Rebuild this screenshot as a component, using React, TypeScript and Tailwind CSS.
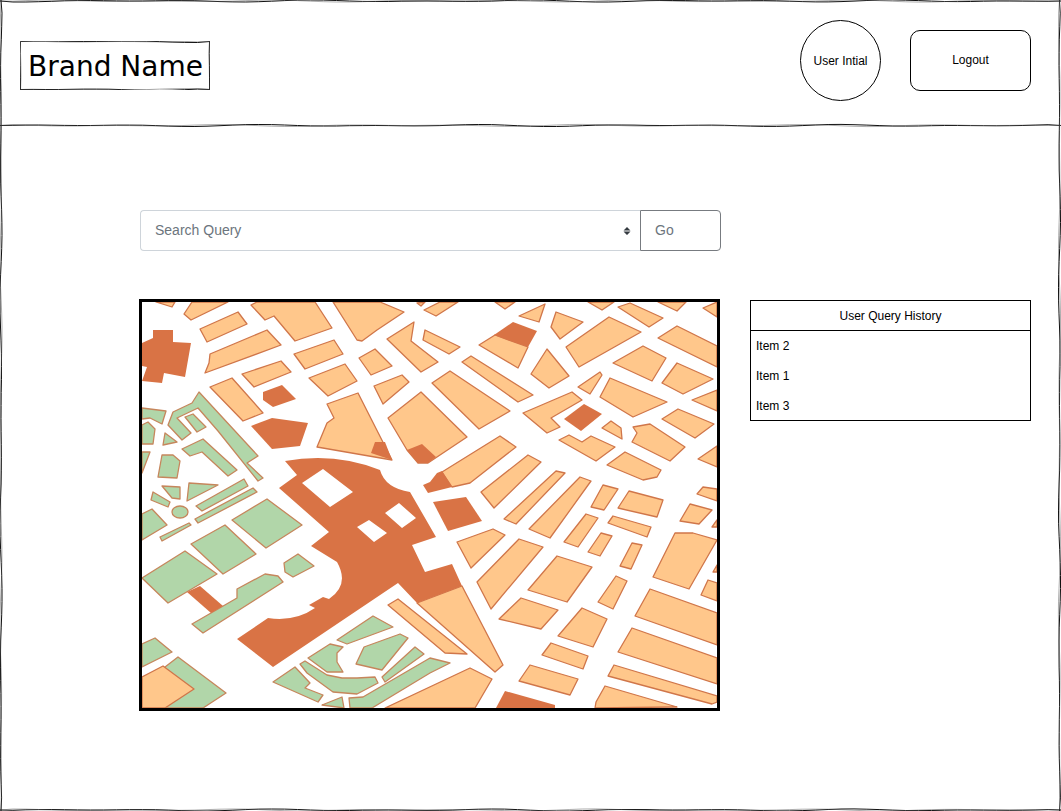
import React from "react";

const LIGHT = [
  "156,302 172,307 175,302", "192,302 184,314 191,320 228,302", "200,329 238,312 247,324 207,342",
  "210,354 267,330 281,345 205,373 209,363", "251,305 265,320 274,316 295,341 332,328 315,302 257,302",
  "294,354 334,340 343,354 305,369", "242,374 281,361 291,372 254,387", "309,378 345,364 357,381 328,396",
  "359,358 375,349 392,366 371,375", "333,302 380,302 404,312 377,330 362,341 357,340",
  "387,339 414,322 411,341 438,362 421,372", "423,340 425,330 460,347 449,354",
  "210,387 232,378 263,413 243,421",
  "417,303 421,306 425,302", "424,310 436,316 458,302 440,302", "495,302 505,309 515,302",
  "519,316 545,304 539,322", "556,312 583,322 560,339 551,327", "588,302 602,310 614,302",
  "618,307 630,303 663,318 649,327", "658,302 677,311 686,302", "703,308 717,302 717,317",
  "566,347 609,317 641,332 579,367", "658,338 677,326 717,346 717,367", "613,363 643,346 666,358 652,381",
  "662,383 677,363 713,379 683,394", "479,345 495,335 528,347 518,368", "462,362 471,356 533,395 518,402",
  "432,383 450,371 510,411 479,429", "531,374 547,349 569,376 549,388", "578,387 600,372 602,375 590,394",
  "600,397 610,378 667,402 633,417", "692,400 717,390 717,411", "698,459 717,446 717,467",
  "374,386 402,375 409,382 383,404", "388,418 421,392 467,437 428,463 418,463 407,450",
  "523,413 572,392 582,400 551,418 560,427 547,433", "602,428 611,421 621,428 622,439",
  "559,440 569,435 582,442 591,436 615,447 596,461", "633,427 650,424 685,447 670,461 632,442 637,433",
  "662,419 678,409 714,424 695,438", "607,465 625,452 661,470 657,477 643,480",
  "442,472 500,436 516,447 470,483 452,487", "481,492 528,455 541,462 494,508", "504,519 556,471 565,473 516,524",
  "529,529 580,477 591,481 550,538", "591,507 603,485 618,489 604,510", "618,508 629,491 663,500 657,517",
  "564,542 586,514 598,518 578,547", "608,523 613,516 651,527 647,537", "588,552 601,533 612,536 600,556",
  "620,566 632,543 642,545 631,569", "680,521 690,504 712,510 699,524", "697,494 703,487 717,489 717,501",
  "712,527 717,520 717,527", "653,577 675,533 693,533 717,540 689,589", "713,572 717,565 717,572",
  "701,595 708,580 717,583 717,601", "457,542 493,529 505,535 471,568", "477,582 519,539 543,547 491,609",
  "528,590 557,556 592,567 567,602", "598,602 616,576 627,581 613,609", "499,619 521,598 558,610 541,629",
  "558,636 582,608 607,619 593,647", "635,616 650,589 717,613 717,645", "542,655 551,643 588,656 583,669",
  "618,652 632,628 717,658 717,684", "519,681 530,665 578,679 570,695", "608,676 614,665 717,696 717,702 712,704",
  "596,702 605,686 677,707 595,708", "417,603 462,586 503,665 495,672", "388,605 398,599 467,654 445,653",
  "385,708 470,668 492,679 475,708", "317,447 327,423 334,418 327,404 358,393 392,460",
];

const DARK = [
  "153,330 173,330 173,342 191,343 185,377 164,373 162,383 142,381 147,367 142,366 142,343 153,338",
  "263,392 282,385 296,399 273,407 263,400", "494,335 513,322 537,331 528,347", "564,419 584,404 602,414 581,431",
  "251,426 272,418 308,423 300,446 272,449", "371,453 375,442 385,442 392,460", "407,450 422,444 436,457 428,463 418,463",
  "423,485 430,482 437,473 442,471 452,487 428,493", "433,502 466,497 482,521 448,531", "187,592 200,586 223,606 211,613",
  "496,708 505,691 555,705 555,708",
];

const GREEN = [
  "142,408 166,411 162,424 150,418 142,419", "142,425 148,422 155,429 153,444 142,444",
  "168,425 173,412 192,403 199,392 258,456 247,463 263,478 258,481 218,431 198,408 177,418 191,433 182,440",
  "185,417 193,414 206,427 197,432", "163,445 165,433 177,442", "182,449 203,439 237,470 228,476 202,452 190,456",
  "142,452 150,452 142,473", "162,455 173,455 180,461 177,478 158,477", "162,486 180,487 180,499 172,498",
  "189,483 218,485 187,501", "153,492 170,502 168,507 151,500", "142,514 152,509 167,525 142,540",
  "160,537 189,523 191,525 162,541", "196,506 244,479 248,486 202,511", "195,519 253,488 257,492 198,523",
  "232,520 267,499 302,525 266,548", "191,544 225,525 256,554 223,574", "142,578 185,551 217,574 168,603",
  "192,624 237,598 237,589 265,574 278,576 283,582 203,633", "284,563 298,554 314,566 293,577 285,572",
  "142,644 155,638 172,652 142,667", "165,667 178,657 226,693 203,708 165,708", "337,640 373,616 393,627 347,644",
  "356,664 364,647 400,634 408,638 382,670", "382,677 415,647 424,654 385,682",
  "308,658 330,644 343,647 337,653 337,662 343,672 327,672",
  "300,664 305,661 327,675 342,678 357,678 375,677 378,683 357,694 333,692 307,673",
  "273,682 295,667 310,683 305,688 323,695 318,702", "349,698 363,697 430,658 450,663 430,673 372,708 350,708",
  "322,705 342,697 344,708",
];

function CityMap() {
  return (
    <svg viewBox="142 302 575 406" className="block w-full h-full bg-white">
      <g fill="#b1d6a9" stroke="#c6865c" strokeWidth="1.3" strokeLinejoin="round">
        {GREEN.map((p) => (
          <polygon key={p} points={p} />
        ))}
        <ellipse cx="180" cy="512" rx="8" ry="6" />
      </g>
      <g fill="#ffc78b" stroke="#d0764a" strokeWidth="1.3" strokeLinejoin="round">
        {LIGHT.map((p) => (
          <polygon key={p} points={p} />
        ))}
        <polygon points="142,677 163,666 194,689 165,708 142,708" />
      </g>
      <g fill="#d97345">
        {DARK.map((p) => (
          <polygon key={p} points={p} />
        ))}
        {/* the big plaza with its courtyards */}
        <path
          fillRule="evenodd"
          d="M285 461 Q335 452 380 470 Q385 488 410 492 L436 537 L412 545 L425 572 L452 564 L462 586 L417 603 L398 583 L273 667 L237 639 L268 618 Q295 622 315 608 L309 605 L323 597 L329 599 Q350 585 337 562 L311 546 L329 532 L279 488 L297 475 Z M302 483 L323 469 L353 492 L330 507 Z M357 527 L369 520 L387 533 L374 542 Z M385 513 L399 503 L416 518 L402 528 Z"
        />
      </g>
    </svg>
  );
}

// hand drawn line, the offsets are fixed so it comes out the same every time
function wobble(x1: number, y1: number, x2: number, y2: number, seed: number) {
  const len = Math.hypot(x2 - x1, y2 - y1);
  const steps = Math.max(2, Math.round(len / 13));
  let d = `M${x1} ${y1}`;
  for (let i = 1; i <= steps; i++) {
    const t = i / steps;
    const off = i === steps ? 0 : (Math.sin((i + seed) * 12.9898) + Math.sin((i + seed) * 0.7)) * 0.55;
    const x = x1 + (x2 - x1) * t + (x1 === x2 ? off : 0);
    const y = y1 + (y2 - y1) * t + (y1 === y2 ? off : 0);
    d += ` L${x.toFixed(1)} ${y.toFixed(1)}`;
  }
  return d;
}

function SketchLine({ from, to, seed }: { from: [number, number]; to: [number, number]; seed: number }) {
  return (
    <>
      <path d={wobble(from[0], from[1], to[0], to[1], seed)} fill="none" stroke="#111" strokeWidth="1" />
      <path d={wobble(from[0], from[1], to[0], to[1], seed + 20)} fill="none" stroke="#555" strokeWidth="0.8" strokeOpacity="0.6" />
    </>
  );
}

export default function App() {
  return (
    <div className="relative h-[811px] w-full overflow-hidden bg-white text-black text-[12px] font-['Liberation_Sans',Arial,sans-serif]">
      {/* sketchy page frame */}
      <svg className="absolute inset-0 pointer-events-none" width="1061" height="811">
        <SketchLine from={[0, 1]} to={[1061, 1]} seed={1} />
        <SketchLine from={[1, 0]} to={[1, 811]} seed={2} />
        <SketchLine from={[1059.5, 0]} to={[1059.5, 811]} seed={3} />
        <SketchLine from={[0, 810]} to={[1061, 810]} seed={4} />
        <SketchLine from={[0, 125.5]} to={[1061, 125.5]} seed={5} />
      </svg>

      <header className="flex h-[126px] items-start pt-5 pl-5 pr-[30px]">
        <div className="relative mt-[21px] flex h-[49px] w-[190px] items-center pl-2 pt-[2px] font-['DejaVu_Sans',sans-serif] text-[28px] leading-none whitespace-nowrap">
          <svg className="absolute inset-0" width="190" height="49">
            <SketchLine from={[0.5, 0.5]} to={[190, 0.5]} seed={6} />
            <SketchLine from={[0.5, 0.5]} to={[0.5, 49]} seed={7} />
            <SketchLine from={[189.5, 0.5]} to={[189.5, 49]} seed={8} />
            <SketchLine from={[0.5, 48.5]} to={[190, 48.5]} seed={9} />
          </svg>
          <span className="relative">Brand Name</span>
        </div>
        <div className="ml-auto flex h-[81px] w-[81px] items-center justify-center rounded-full border border-black">
          User Intial
        </div>
        <button className="ml-[29px] mt-[10px] h-[61px] w-[121px] rounded-[10px] border border-black pb-[2px]">Logout</button>
      </header>

      <main className="pt-[84px] pl-[139px]">
        <div className="flex h-[41px] w-[582px] pl-px text-[14px] text-[#6c757d]">
          <div className="flex w-[500px] items-center justify-between rounded-l border border-r-0 border-[#ced4da] pl-[14px] pr-[8px]">
            <span>Search Query</span>
            <svg width="8" height="8" viewBox="0 0 8 8" className="mr-px">
              <path d="M4 0 L7.5 3.4 H0.5 Z M0.5 4.6 H7.5 L4 8 Z" fill="#343a40" />
            </svg>
          </div>
          <div className="flex w-[81px] items-center rounded-r border border-[#777b80] pl-[14px]">Go</div>
        </div>

        <div className="mt-[48px] flex items-start">
          <div className="h-[412px] w-[581px] border-[3px] border-black">
            <CityMap />
          </div>
          <div className="ml-[30px] mt-px w-[281px] border border-black">
            <div className="flex h-[30px] items-center justify-center border-b border-black">User Query History</div>
            <div className="flex h-[30px] items-center pl-[5px]">Item 2</div>
            <div className="flex h-[30px] items-center pl-[5px]">Item 1</div>
            <div className="flex h-[29px] items-center pl-[5px] pt-px">Item 3</div>
          </div>
        </div>
      </main>
    </div>
  );
}
